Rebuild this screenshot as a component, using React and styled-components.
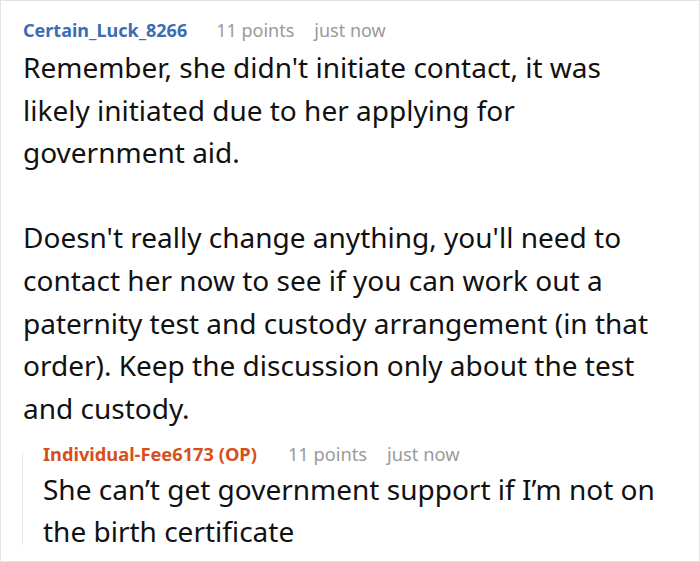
import React from "react";
import styled, { createGlobalStyle } from "styled-components";

const Global = createGlobalStyle`
  html, body { margin: 0; padding: 0; background: #fff; }
  body { font-family: "Noto Sans", "Open Sans", sans-serif; }
`;

const Frame = styled.div`
  box-sizing: border-box;
  width: 700px;
  height: 562px;
  border: 1px solid #e3e3e3;
  padding: 16px 28px 0 22px;
  overflow: hidden;
  background: #fff;
`;

const Comment = styled.div`
  display: flex;
  flex-direction: column;
`;

const Meta = styled.div`
  display: flex;
  align-items: baseline;
  gap: 20px;
  font-size: ${(p) => p.$size || 18}px;
  line-height: 26px;
  white-space: nowrap;
`;

const Author = styled.span`
  font-weight: 700;
  margin-right: ${(p) => (p.$op ? 11 : 9)}px;
  color: ${(p) => (p.$op ? "#d6501c" : "#3a6db3")};
`;

const Info = styled.span`
  color: #9a9a9a;
`;

const Body = styled.div`
  font-size: 28px;
  line-height: ${(p) => p.$lh}px;
  color: #111;
  margin-top: ${(p) => p.$mt}px;
  p { margin: 0; }
  p + p { margin-top: ${(p) => p.$lh}px; }
`;

const Reply = styled.div`
  position: relative;
  margin-top: 12px;
  padding-left: 20px;
  &::before {
    content: "";
    position: absolute;
    left: -1px;
    top: 12px;
    bottom: 8px;
    width: 1px;
    background: #e6e6e6;
  }
`;

export default function App() {
  return (
    <>
      <Global />
      <Frame>
        <Comment>
          <Meta>
            <Author>Certain_Luck_8266</Author>
            <Info>11 points</Info>
            <Info>just now</Info>
          </Meta>
          <Body $lh={42.6} $mt={3}>
            <p>
              Remember, she didn't initiate contact, it was likely initiated due
              to her applying for government aid.
            </p>
            <p>
              Doesn't really change anything, you'll need to contact her now to
              see if you can work out a paternity test and custody arrangement
              (in that order). Keep the discussion only about the test and
              custody.
            </p>
          </Body>
          <Reply>
            <Meta $size={18.25}>
              <Author $op>Individual-Fee6173 (OP)</Author>
              <Info>11 points</Info>
              <Info>just now</Info>
            </Meta>
            <Body $lh={41.7} $mt={2}>
              <p>She can’t get government support if I’m not on the birth certificate</p>
            </Body>
          </Reply>
        </Comment>
      </Frame>
    </>
  );
}
